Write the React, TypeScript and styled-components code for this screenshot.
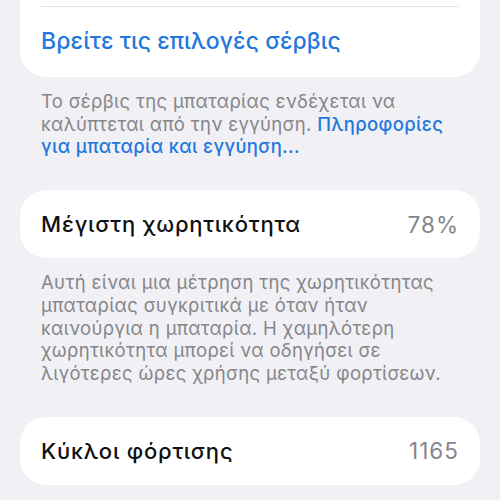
import React from "react";
import styled, { createGlobalStyle } from "styled-components";

const GlobalStyle = createGlobalStyle`
  html, body {
    margin: 0;
    padding: 0;
    background: #f0f0f5;
  }
  body {
    font-family: Inter, "Noto Sans", "Liberation Sans", sans-serif;
    -webkit-font-smoothing: antialiased;
  }
`;

const palette = {
  bg: "#f0f0f5",
  card: "#ffffff",
  black: "#111111",
  gray: "#86868a",
  blue: "#1f78dd",
  line: "#e2e2e7",
};

const App: React.FC = () => {
  return (
    <>
      <GlobalStyle />
      <Page>
        <Card>
          <HiddenRow />
          <Separator />
          <LinkRow>Βρείτε τις επιλογές σέρβις</LinkRow>
        </Card>
        <Footnote>
          Το σέρβις της μπαταρίας ενδέχεται να καλύπτεται από την εγγύηση.{" "}
          <FootLink>Πληροφορίες για μπαταρία και εγγύηση...</FootLink>
        </Footnote>

        <Card>
          <ValueRow>
            <Label>Μέγιστη χωρητικότητα</Label>
            <Value>78%</Value>
          </ValueRow>
        </Card>
        <Footnote>
          Αυτή είναι μια μέτρηση της χωρητικότητας μπαταρίας συγκριτικά με όταν
          ήταν καινούργια η μπαταρία. Η χαμηλότερη χωρητικότητα μπορεί να
          οδηγήσει σε λιγότερες ώρες χρήσης μεταξύ φορτίσεων.
        </Footnote>

        <Card>
          <ValueRow>
            <Label>Κύκλοι φόρτισης</Label>
            <Value>1165</Value>
          </ValueRow>
        </Card>
        <Footnote>
          Ο αριθμός των φορές που η μπαταρία έχει φορτιστεί πλήρως.
        </Footnote>
      </Page>
    </>
  );
};

export default App;

const Page = styled.div`
  margin-top: -50px;
  padding: 0 20px 40px;
  display: flex;
  flex-direction: column;
  overflow: hidden;
`;

const Card = styled.div`
  background: ${palette.card};
  border-radius: 26px;
  padding: 0 21px;
  display: flex;
  flex-direction: column;
`;

const HiddenRow = styled.div`
  height: 56px;
`;

const Separator = styled.div`
  height: 1px;
  background: ${palette.line};
`;

const LinkRow = styled.div`
  height: 70px;
  display: flex;
  align-items: center;
  padding-bottom: 3px;
  box-sizing: border-box;
  font-size: 23px;
  font-weight: 500;
  letter-spacing: 0.1px;
  color: ${palette.blue};
`;

const ValueRow = styled.div`
  height: 68px;
  display: flex;
  align-items: center;
  justify-content: space-between;
  font-size: 22px;
  font-weight: 500;
  letter-spacing: 0.8px;
`;

const Label = styled.span`
  color: ${palette.black};
`;

const Value = styled.span`
  color: ${palette.gray};
  font-size: 22.5px;
  font-weight: 400;
  letter-spacing: 1px;
`;

const Footnote = styled.p`
  margin: 13px 0 32px;
  padding: 0 21px;
  font-size: 18.5px;
  line-height: 22.7px;
  letter-spacing: 0.35px;
  color: ${palette.gray};
`;

const FootLink = styled.span`
  color: ${palette.blue};
  font-weight: 500;
`;
